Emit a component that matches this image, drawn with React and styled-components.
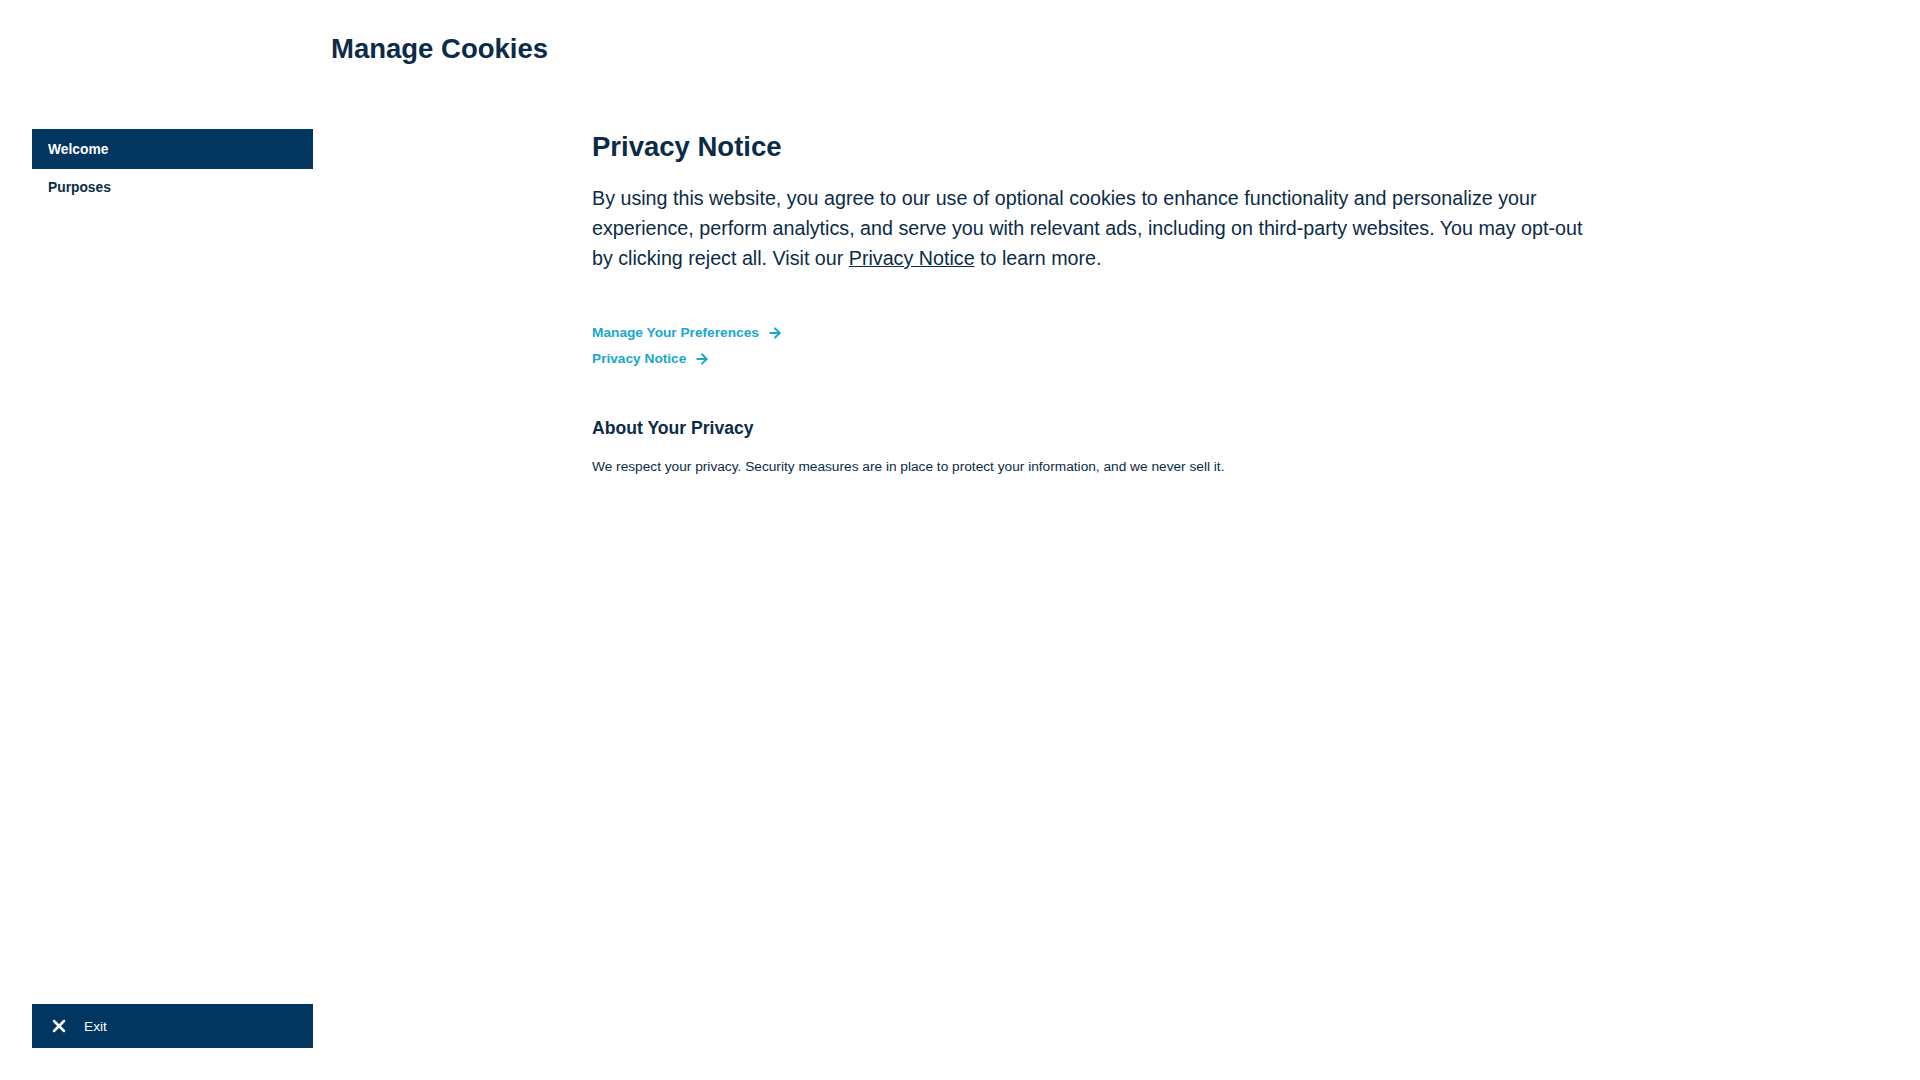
import React from "react";
import styled, { createGlobalStyle } from "styled-components";
import { ArrowRight, X } from "lucide-react";

const navy = "#00365f";
const ink = "#0b2b48";
const cyan = "#19a7cf";

const GlobalStyle = createGlobalStyle`
  html, body {
    margin: 0;
    padding: 0;
    background: #ffffff;
    font-family: "Liberation Sans", Arial, sans-serif;
    color: ${ink};
  }
  * { box-sizing: border-box; }
`;

const Page = styled.div`
  display: grid;
  grid-template-columns: 313px 1fr;
  height: 100vh;
`;

const Sidebar = styled.aside`
  display: flex;
  flex-direction: column;
  padding: 129px 0 32px 32px;
`;

const Nav = styled.nav`
  display: flex;
  flex-direction: column;
  flex: 1;
`;

const NavItem = styled.a`
  display: flex;
  align-items: center;
  height: 40px;
  padding: 0 0 ${(p) => (p.$active ? 0 : 3)}px 16px;
  font-size: 13.8px;
  font-weight: 700;
  text-decoration: none;
  cursor: pointer;
  color: ${(p) => (p.$active ? "#ffffff" : ink)};
  background: ${(p) => (p.$active ? navy : "transparent")};
`;

const ExitButton = styled.button`
  display: flex;
  align-items: center;
  gap: 15px;
  height: 44px;
  padding: 0 0 0 17px;
  border: 0;
  background: ${navy};
  color: #ffffff;
  font-family: inherit;
  font-size: 13.7px;
  text-align: left;
  cursor: pointer;
`;

const Main = styled.main`
  display: flex;
  flex-direction: column;
  padding-left: 18px;
`;

const Title = styled.h1`
  margin: 32px 0 0;
  font-size: 27.5px;
  line-height: 34px;
  font-weight: 700;
  color: ${ink};
`;

const Content = styled.section`
  margin: 64px 0 0 261px;
  max-width: 1015px;
`;

const Heading = styled.h2`
  margin: 0;
  font-size: 27.5px;
  line-height: 34px;
  font-weight: 700;
`;

const Lead = styled.p`
  margin: 19px 0 0;
  font-size: 19.7px;
  line-height: 30px;
`;

const InlineLink = styled.a`
  color: ${ink};
  text-decoration: underline;
  cursor: pointer;
`;

const Links = styled.div`
  display: flex;
  flex-direction: column;
  align-items: flex-start;
  gap: 6px;
  margin-top: 50px;
`;

const ArrowLink = styled.a`
  display: inline-flex;
  align-items: center;
  gap: 8px;
  font-size: 13.7px;
  line-height: 20px;
  font-weight: 700;
  color: ${cyan};
  text-decoration: none;
  cursor: pointer;
`;

const SubHeading = styled.h3`
  margin: 48px 0 0;
  font-size: 17.6px;
  line-height: 22px;
  font-weight: 700;
`;

const Small = styled.p`
  margin: 18px 0 0;
  font-size: 13.7px;
  line-height: 20px;
`;

export default function App() {
  return (
    <>
      <GlobalStyle />
      <Page>
        <Sidebar>
          <Nav>
            <NavItem $active>Welcome</NavItem>
            <NavItem>Purposes</NavItem>
          </Nav>
          <ExitButton>
            <X size={20} strokeWidth={3} />
            Exit
          </ExitButton>
        </Sidebar>
        <Main>
          <Title>Manage Cookies</Title>
          <Content>
            <Heading>Privacy Notice</Heading>
            <Lead>
              By using this website, you agree to our use of optional cookies to enhance
              functionality and personalize your experience, perform analytics, and serve you
              with relevant ads, including on third-party websites. You may opt-out by clicking
              reject all. Visit our <InlineLink>Privacy Notice</InlineLink> to learn more.
            </Lead>
            <Links>
              <ArrowLink>
                Manage Your Preferences <ArrowRight size={16} strokeWidth={3} />
              </ArrowLink>
              <ArrowLink>
                Privacy Notice <ArrowRight size={16} strokeWidth={3} />
              </ArrowLink>
            </Links>
            <SubHeading>About Your Privacy</SubHeading>
            <Small>
              We respect your privacy. Security measures are in place to protect your
              information, and we never sell it.
            </Small>
          </Content>
        </Main>
      </Page>
    </>
  );
}
